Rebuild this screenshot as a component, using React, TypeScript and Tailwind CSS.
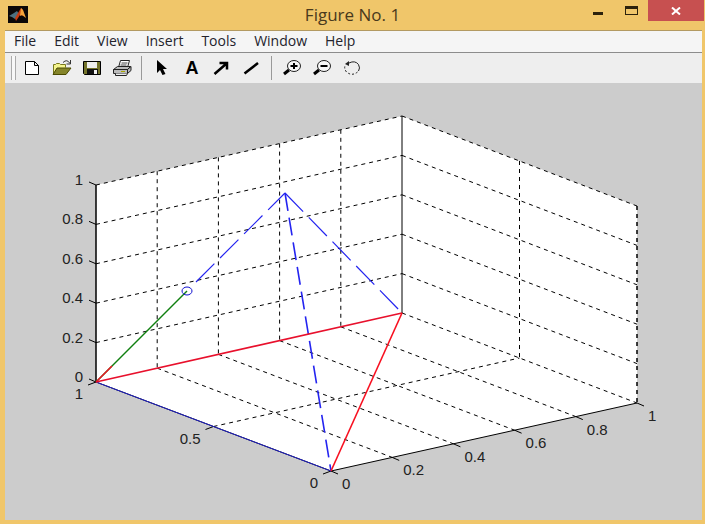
import React from 'react';

type Point = [number, number];

const menus = ['File', 'Edit', 'View', 'Insert', 'Tools', 'Window', 'Help'];

// corners of the axes box
const LEFT: Point = [96, 382];
const BACK: Point = [402, 313];
const RIGHT: Point = [637, 403];
const FRONT: Point = [331, 471];
const APEX: Point = [285, 193];
const MARKER: Point = [187, 291];
const HEIGHT = 197;

const lerp = (a: Point, b: Point, t: number): Point => [a[0] + (b[0] - a[0]) * t, a[1] + (b[1] - a[1]) * t];
const up = (p: Point, t: number): Point => [p[0], p[1] - HEIGHT * t];

interface LineProps {
  from: Point;
  to: Point;
  color?: string;
  dash?: string;
  width?: number;
}

const Line: React.FC<LineProps> = ({ from, to, color = '#000', dash, width = 1 }) => (
  <line x1={from[0]} y1={from[1]} x2={to[0]} y2={to[1]} stroke={color} strokeDasharray={dash} strokeWidth={width} />
);

const Plot: React.FC = () => {
  const steps = [0.2, 0.4, 0.6, 0.8];
  const levels = [0, 0.2, 0.4, 0.6, 0.8, 1];
  const outline = [LEFT, up(LEFT, 1), up(BACK, 1), up(RIGHT, 1), RIGHT, FRONT];

  return (
    <svg viewBox="5 83 697 437" className="block w-full" role="img" aria-label="3-D plot">
      <polygon points={outline.map((p) => p.join(',')).join(' ')} fill="#fff" />

      {/* wall grid */}
      {levels.slice(1).map((z) => (
        <g key={z}>
          <Line from={up(LEFT, z)} to={up(BACK, z)} dash="4 4" />
          <Line from={up(BACK, z)} to={up(RIGHT, z)} dash="4 4" />
        </g>
      ))}
      {steps.map((x) => (
        <g key={x}>
          <Line from={up(lerp(LEFT, BACK, x), 1)} to={lerp(LEFT, BACK, x)} dash="4 4" />
          <Line from={lerp(LEFT, BACK, x)} to={lerp(FRONT, RIGHT, x)} dash="4 4" />
        </g>
      ))}
      <Line from={up(lerp(BACK, RIGHT, 0.5), 1)} to={lerp(BACK, RIGHT, 0.5)} dash="4 4" />
      <Line from={lerp(LEFT, FRONT, 0.5)} to={lerp(BACK, RIGHT, 0.5)} dash="4 4" />
      <Line from={BACK} to={RIGHT} dash="4 4" />
      <Line from={up(RIGHT, 1)} to={RIGHT} dash="4 4" width={1.5} />

      {/* axes */}
      <Line from={up(LEFT, 1)} to={LEFT} width={1.5} />
      <Line from={up(BACK, 1)} to={BACK} />
      <Line from={LEFT} to={FRONT} />
      <Line from={FRONT} to={RIGHT} />

      {/* ticks and labels */}
      <g fill="#222" className="font-['Liberation_Sans',Arial,sans-serif] text-[15px]">
        {levels.map((z) => {
          const [x, y] = up(LEFT, z);
          return (
            <g key={z}>
              <Line from={[x, y]} to={[x - 7, y - 3]} />
              <text x={x - 13} y={y} textAnchor="end">
                {z}
              </text>
            </g>
          );
        })}
        {levels.map((v) => {
          const [x, y] = lerp(FRONT, RIGHT, v);
          return (
            <g key={v}>
              <Line from={[x, y]} to={[x + 7, y + 3]} />
              <text x={x + 11} y={y + 18}>
                {v}
              </text>
            </g>
          );
        })}
        {[0, 0.5, 1].map((v) => {
          const [x, y] = lerp(FRONT, LEFT, v);
          return (
            <g key={v}>
              <Line from={[x, y]} to={[x - 8, y + 3]} />
              <text x={x - 13} y={y + 17} textAnchor="end">
                {v}
              </text>
            </g>
          );
        })}
      </g>

      {/* data */}
      <Line from={LEFT} to={FRONT} color="#2020c8" />
      <Line from={[196, 282]} to={APEX} color="#2424f0" dash="26 8" width={1.2} />
      <Line from={APEX} to={BACK} color="#2424f0" dash="26 8" width={1.2} />
      <Line from={APEX} to={FRONT} color="#2424f0" dash="18 7" width={1.6} />
      <Line from={LEFT} to={MARKER} color="#108010" width={1.5} />
      <Line from={LEFT} to={[112, 366]} color="#f01020" width={1.5} />
      <Line from={LEFT} to={BACK} color="#e8102c" width={1.6} />
      <Line from={BACK} to={FRONT} color="#f81020" width={1.6} />
      <ellipse cx={MARKER[0]} cy={MARKER[1]} rx="5" ry="4" fill="none" stroke="#1010d0" />
    </svg>
  );
};

const tools: { name: string; icon?: React.ReactNode; label?: string }[][] = [
  [
    { name: 'New', icon: <path d="M3.5 3.5h9l4 4v9h-13zM12.5 3.5v4h4" fill="#fff" stroke="#000" /> },
    {
      name: 'Open',
      icon: (
        <>
          <path d="M1.5 15.5v-9h2l1-1h3l1 1h5v3" fill="#f4f48c" stroke="#77771c" />
          <path d="M1 16.5l4-6.5h14l-5 6.5z" fill="#85852a" stroke="#4a4a00" />
          <path d="M11 4.5q4-4 7 1M18.5 2v4h-4" fill="none" stroke="#333" />
        </>
      ),
    },
    {
      name: 'Save',
      icon: (
        <>
          <path d="M1.5 3.5h17v13h-16l-1-1z" fill="#73732a" stroke="#000" />
          <path d="M5 4h10v6H5z" fill="#eee" />
          <path d="M5 11h11v5H5z" fill="#111" />
          <path d="M12 12h3v4h-3z" fill="#eee" />
        </>
      ),
    },
    {
      name: 'Print',
      icon: (
        <>
          <path d="M6.5 9.5l2-7h9l-2 7" fill="#fff" stroke="#222" />
          <path d="M9.5 5h6M8.5 7h6" stroke="#444" />
          <path d="M1.5 11.5l4-3h13l-3 3zM1.5 11.5h14v4h-14zM15.5 11.5l3.5-3v4l-3.5 3z" fill="#bbb" stroke="#222" />
          <path d="M3.5 15.5v2h11l1-2" fill="#eee" stroke="#222" />
          <path d="M9 13.5h4" stroke="#aaa800" />
        </>
      ),
    },
  ],
  [
    { name: 'Select', icon: <path d="M5 2v13l3-3 2.500 5 3-1-2.500-5h4z" fill="#000" /> },
    { name: 'Text', label: 'A' },
    { name: 'Arrow', icon: <path d="M2.5 16L14 6M7.5 5H15v6.5" fill="none" stroke="#000" strokeWidth="2.5" /> },
    { name: 'Line', icon: <path d="M2.5 15.5L16 5" stroke="#000" strokeWidth="2.5" /> },
  ],
  [
    {
      name: 'Zoom in',
      icon: (
        <>
          <ellipse cx="12" cy="8" rx="6.5" ry="5.5" fill="#f8f8f8" stroke="#222" />
          <path d="M8.5 8h7M12 5v6" stroke="#000" strokeWidth="2" />
          <path d="M7 12l-5 4" stroke="#000" strokeWidth="3" />
        </>
      ),
    },
    {
      name: 'Zoom out',
      icon: (
        <>
          <ellipse cx="12" cy="8" rx="6.5" ry="5.5" fill="#f8f8f8" stroke="#222" />
          <path d="M8.5 8h7" stroke="#000" strokeWidth="2" />
          <path d="M7 12l-5 4" stroke="#000" strokeWidth="3" />
        </>
      ),
    },
    {
      name: 'Rotate 3D',
      icon: (
        <>
          <path d="M7 5q6-3 9.500 1.500 2 3.500 0 6.500" fill="none" stroke="#222" />
          <path d="M15.500 14q-5.500 4.500-11 0-3-4-1-7" fill="none" stroke="#222" strokeDasharray="2 2" />
          <path d="M3 6l4-3v5z" fill="#222" />
        </>
      ),
    },
  ],
];

const App: React.FC = () => {
  return (
    <div className="min-h-screen bg-[#f0c66a] pb-1 font-['Open_Sans','Noto_Sans',sans-serif]">
      {/* title bar */}
      <header className="grid h-[30px] grid-cols-[1fr_auto_1fr] items-start">
        <svg viewBox="0 0 20 17" className="mt-1.5 ml-2 h-[17px] w-5" aria-hidden="true">
          <path d="M0 0h20v17H0z" fill="#0c0808" />
          <path d="M1 10l5-3 3-2 2 3-4 5-3-2z" fill="#4d7080" />
          <path d="M7 12l3-5 3-5 2 2 1 6-4-1-4 6z" fill="#c63c12" />
          <path d="M13 2l2 2 3 8-4-3-2 1z" fill="#f5a43a" />
        </svg>
        <h1 className="pt-1 text-[17px] leading-[22px] text-[#49391c]">Figure No. 1</h1>
        <div className="mr-px flex justify-end">
          <button type="button" aria-label="Minimize" className="flex h-5 w-[34px] items-center justify-center">
            <span className="mt-1.5 h-[3px] w-2.5 bg-[#2c220c]" />
          </button>
          <button type="button" aria-label="Maximize" className="flex h-[21px] w-[33px] items-center justify-center">
            <span className="h-[9px] w-[13px] border border-t-[3px] border-[#2c220c]" />
          </button>
          <button type="button" aria-label="Close" className="flex h-[21px] w-14 items-center justify-center bg-[#c75050]">
            <svg viewBox="0 0 10 8" className="h-2 w-2.5">
              <path d="M1 0.5l8 7M9 0.5l-8 7" stroke="#fff" strokeWidth="2" />
            </svg>
          </button>
        </div>
      </header>

      <main className="mr-[3px] ml-[5px] border-t border-[#b39a62] bg-[#ccc]">
        <nav className="flex h-[21px] gap-[18px] bg-[#f5f5f5] pb-0.5 pl-[9px] text-sm leading-[19px] text-[#23232c]">
          {menus.map((menu) => (
            <button key={menu} type="button">
              {menu}
            </button>
          ))}
        </nav>

        <div role="toolbar" className="flex h-[31px] items-center border-t border-[#8c8c8c] bg-[#eee] pl-1.5">
          <span className="mr-px h-6 w-[5px] border-x border-[#aaa] bg-[#f8f8f8]" />
          {tools.map((group, i) => (
            <div key={i} className="flex items-center">
              {i > 0 && <span className="mr-[5px] ml-1 h-6 w-px bg-[#999]" />}
              {group.map(({ name, icon, label }) => (
                <button key={name} type="button" aria-label={name} className="flex w-[30px] justify-center">
                  {label ? (
                    <span className="font-['Liberation_Sans',Arial,sans-serif] text-lg leading-5 font-bold">{label}</span>
                  ) : (
                    <svg viewBox="0 0 20 20" className="size-5">
                      {icon}
                    </svg>
                  )}
                </button>
              ))}
            </div>
          ))}
        </div>

        <Plot />
      </main>
    </div>
  );
};

export default App;
